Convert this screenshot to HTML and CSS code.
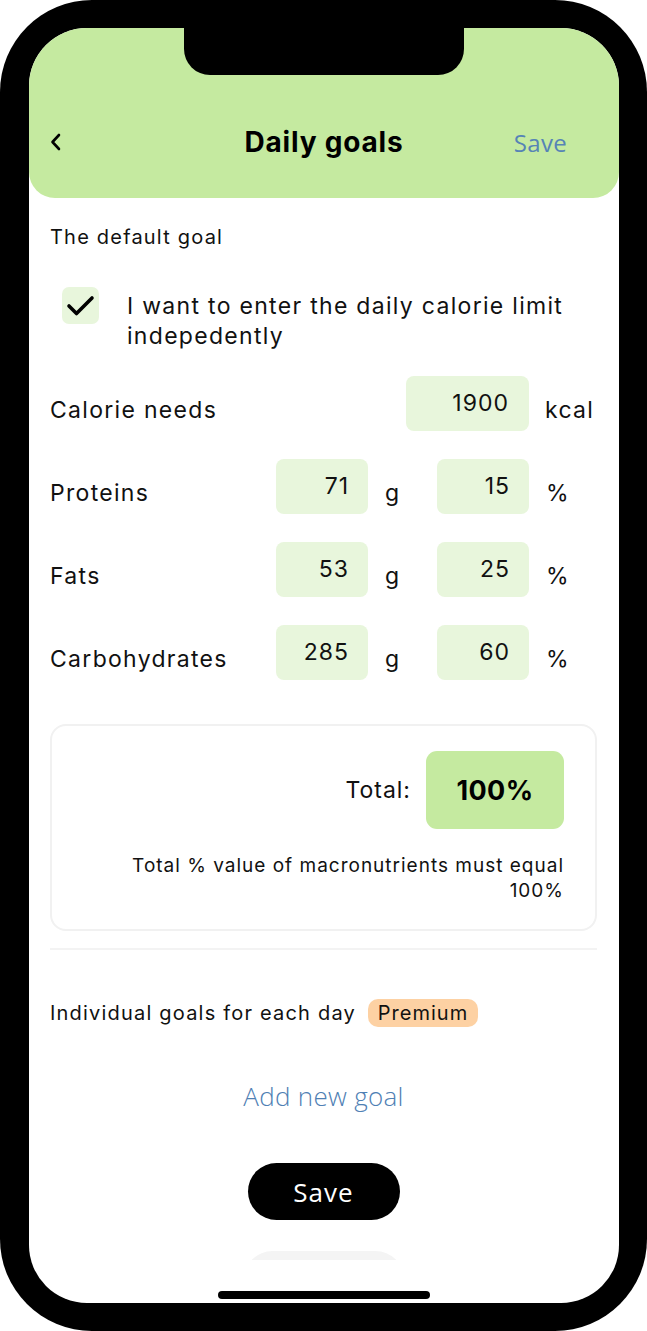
FILE: index.html
```html
<!DOCTYPE html>
<html lang="en">
<head>
<meta charset="utf-8">
<title>Daily goals</title>
<link rel="stylesheet" href="styles.css">
</head>
<body>
<div class="phone">
  <div class="screen">
    <div class="notch"></div>
    <header class="header">
      <nav class="nav">
        <span class="back">
          <svg width="14" height="18" viewBox="0 0 14 18"><path d="M10 2 L3.5 9 L10 16" fill="none" stroke="#000" stroke-width="2.6" stroke-linecap="round" stroke-linejoin="round"/></svg>
        </span>
        <h1 class="title">Daily goals</h1>
        <span class="nav-save">Save</span>
      </nav>
    </header>

    <main class="content">
      <p class="section-label">The default goal</p>

      <div class="check-row">
        <span class="checkbox">
          <svg width="37" height="37" viewBox="0 0 37 37"><path d="M7 19 L14.5 26.5 L30 11" fill="none" stroke="#000" stroke-width="3.6" stroke-linecap="round" stroke-linejoin="round"/></svg>
        </span>
        <span class="check-label">I want to enter the daily calorie limit indepedently</span>
      </div>

      <div class="rows">
        <div class="row">
          <span class="row-label">Calorie needs</span>
          <span class="field field-wide">1900</span>
          <span class="unit">kcal</span>
        </div>
        <div class="row">
          <span class="row-label">Proteins</span>
          <span class="field">71</span>
          <span class="unit unit-g">g</span>
          <span class="field">15</span>
          <span class="unit">%</span>
        </div>
        <div class="row">
          <span class="row-label">Fats</span>
          <span class="field">53</span>
          <span class="unit unit-g">g</span>
          <span class="field">25</span>
          <span class="unit">%</span>
        </div>
        <div class="row">
          <span class="row-label">Carbohydrates</span>
          <span class="field">285</span>
          <span class="unit unit-g">g</span>
          <span class="field">60</span>
          <span class="unit">%</span>
        </div>
      </div>

      <section class="total-card">
        <div class="total-row">
          <span class="total-label">Total:</span>
          <span class="total-value">100%</span>
        </div>
        <p class="total-note">Total % value of macronutrients must equal<br>100%</p>
      </section>

      <hr class="divider">

      <div class="individual">
        <span>Individual goals for each day</span>
        <span class="badge">Premium</span>
      </div>

      <p class="add-goal">Add new goal</p>

      <div class="actions">
        <button class="save-btn">Save</button>
        <div class="ghost-btn"></div>
      </div>
    </main>

    <footer class="footer">
      <span class="home-indicator"></span>
    </footer>
  </div>
</div>
</body>
</html>
```

FILE: styles.css
```css
* { box-sizing: border-box; }

html, body {
  margin: 0;
  padding: 0;
  background: #ffffff;
}

body {
  font-family: "Inter", "Noto Sans", sans-serif;
  color: #111;
}

.phone {
  width: 647px;
  height: 1331px;
  background: #000;
  border-radius: 92px;
  padding: 28px 28px 28px 29px;
}

.screen {
  position: relative;
  height: 100%;
  background: #fff;
  border-radius: 58px;
  overflow: hidden;
  display: flex;
  flex-direction: column;
}

.notch {
  position: absolute;
  top: 0;
  left: 155px;
  width: 280px;
  height: 47px;
  background: #000;
  border-radius: 0 0 26px 26px;
  z-index: 2;
}

.header {
  flex: none;
  height: 170px;
  background: #c5eaa0;
  border-radius: 0 0 26px 26px;
  display: flex;
  flex-direction: column;
  justify-content: flex-end;
  padding: 0 52px 36px 20px;
}

.nav {
  display: grid;
  grid-template-columns: 1fr auto 1fr;
  align-items: center;
  height: 40px;
}

.back {
  display: flex;
  align-items: center;
}

.title {
  margin: 0;
  font-size: 28px;
  font-weight: 700;
  letter-spacing: 0.8px;
  color: #000;
  transform: translateX(16px);
}

.nav-save {
  justify-self: end;
  font-family: "Open Sans", sans-serif;
  font-size: 24px;
  letter-spacing: 0.3px;
  color: #5684b6;
}

.content {
  flex: 1;
  overflow: hidden;
  padding: 27px 22px 0 21px;
}

.section-label {
  margin: 0;
  font-size: 20px;
  line-height: 24px;
  letter-spacing: 1.2px;
  color: #111;
}

.check-row {
  display: flex;
  align-items: flex-start;
  margin-top: 38px;
  padding-left: 12px;
}

.checkbox {
  flex: none;
  width: 37px;
  height: 37px;
  border-radius: 7px;
  background: #e8f6dc;
  display: flex;
}

.check-label {
  margin: 4px 0 0 28px;
  font-size: 23px;
  line-height: 30px;
  letter-spacing: 1.3px;
  color: #111;
}

.rows {
  display: flex;
  flex-direction: column;
  gap: 28px;
  margin-top: 25px;
}

.row {
  display: flex;
  align-items: flex-end;
  height: 55px;
  letter-spacing: 1.3px;
}

.row-label {
  flex: 1;
  font-size: 23px;
  line-height: 30px;
  padding-bottom: 6px;
}

.field {
  flex: none;
  width: 92px;
  height: 55px;
  border-radius: 8px;
  background: #e8f6dc;
  font-size: 23px;
  line-height: 55px;
  text-align: right;
  padding-right: 19px;
  letter-spacing: 1px;
}

.field-wide {
  width: 123px;
  padding-right: 20px;
}

.unit {
  flex: none;
  width: 68px;
  font-size: 23px;
  line-height: 30px;
  padding: 0 0 6px 17px;
}

.unit-g {
  width: 69px;
}

.row .field-wide + .unit {
  padding-left: 16px;
}

.total-card {
  margin-top: 44px;
  border: 2px solid #f1f1f1;
  border-radius: 16px;
  padding: 25px 31px 26px 20px;
}

.total-row {
  display: flex;
  justify-content: flex-end;
  align-items: center;
  gap: 15px;
}

.total-label {
  font-size: 23px;
  letter-spacing: 1px;
}

.total-value {
  width: 138px;
  height: 78px;
  border-radius: 11px;
  background: #c5eaa0;
  display: flex;
  align-items: center;
  justify-content: center;
  font-size: 27px;
  font-weight: 700;
  letter-spacing: 0.4px;
  color: #000;
}

.total-note {
  margin: 24px 0 0;
  text-align: right;
  font-size: 19px;
  line-height: 25px;
  letter-spacing: 1px;
}

.divider {
  margin: 17px 0 0;
  border: 0;
  height: 2px;
  background: #f3f3f3;
}

.individual {
  display: flex;
  align-items: center;
  gap: 12px;
  margin-top: 49px;
  font-size: 20px;
  letter-spacing: 1.2px;
}

.badge {
  display: inline-flex;
  align-items: center;
  justify-content: center;
  width: 110px;
  height: 28px;
  border-radius: 10px;
  background: #fdd1a3;
  font-size: 20px;
  letter-spacing: 1px;
}

.add-goal {
  margin: 54px 0 0;
  text-align: center;
  font-family: "Open Sans", sans-serif;
  font-size: 26px;
  font-weight: 300;
  line-height: 30px;
  letter-spacing: 0.3px;
  color: #4f80b4;
}

.actions {
  display: flex;
  flex-direction: column;
  align-items: center;
  margin-top: 52px;
}

.save-btn {
  width: 152px;
  height: 57px;
  border: 0;
  border-radius: 29px;
  background: #000;
  color: #fff;
  font-family: "Open Sans", sans-serif;
  font-size: 26px;
  letter-spacing: 1px;
  padding: 0;
}

.ghost-btn {
  width: 160px;
  height: 57px;
  margin-top: 31px;
  border-radius: 29px;
  background: #f4f4f4;
}

.footer {
  flex: none;
  height: 43px;
  display: flex;
  justify-content: center;
  padding-top: 31px;
}

.home-indicator {
  width: 212px;
  height: 8px;
  border-radius: 4px;
  background: #000;
}
```
